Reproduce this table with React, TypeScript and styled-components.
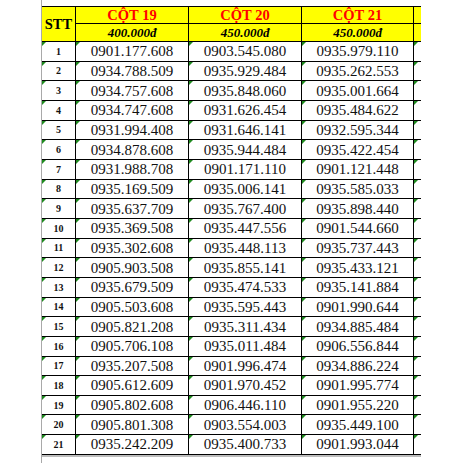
import styled, { createGlobalStyle } from 'styled-components'

const GlobalStyle = createGlobalStyle`
  html, body {
    margin: 0;
    padding: 0;
    background: #ffffff;
  }
  body {
    font-family: "Liberation Serif", "Times New Roman", serif;
  }
`

const Page = styled.div`
  width: 463px;
  height: 463px;
  overflow: hidden;
  padding-left: 41px;
  box-sizing: border-box;
`

const Frame = styled.div`
  height: 100%;
  border-left: 1px solid #a9a9a9;
  padding-top: 6px;
  box-sizing: border-box;
`

const TableWrap = styled.div`
  display: inline-block;
  border-bottom: 2px solid #bcbcbc;
`

const Table = styled.table`
  border-collapse: separate;
  border-spacing: 0;
  table-layout: fixed;
  border-top: 1px solid #000;
`

interface CellProps {
  $w?: number;
  $open?: boolean;
}

const HeadCell = styled.th<CellProps>`
  box-sizing: border-box;
  width: ${p => p.$w}px;
  padding: 0;
  background: #ffff00;
  border-right: ${p => (p.$open ? 'none' : '1px solid #000')};
  border-bottom: 1px solid #000;
  text-align: center;
  vertical-align: middle;
  font-weight: bold;
  white-space: nowrap;
  overflow: hidden;
`

const SttHead = styled(HeadCell)`
  font-size: 14.5px;
  color: #000;
`

const TitleCell = styled(HeadCell)`
  height: 17px;
  font-size: 14.5px;
  color: #ff0000;
  line-height: 16px;
`

const PriceCell = styled(HeadCell)`
  height: 18px;
  font-size: 13px;
  font-style: italic;
  color: #000;
  line-height: 17px;
`

const Row = styled.tr`
  height: 19.67px;
`

const Cell = styled.td<CellProps>`
  position: relative;
  box-sizing: border-box;
  height: 19.67px;
  padding: 0;
  border-right: ${p => (p.$open ? 'none' : '1px solid #000')};
  border-bottom: 1px solid #000;
  text-align: center;
  vertical-align: middle;
  white-space: nowrap;
  overflow: hidden;
  &::before {
    content: '';
    position: absolute;
    left: 0;
    top: 0;
    border-top: 4px solid #1e8a1e;
    border-right: 4px solid transparent;
  }
`

const SttCell = styled(Cell)`
  font-size: 10px;
  font-weight: bold;
  color: #111;
`

const PhoneCell = styled(Cell)`
  font-size: 15px;
  color: #111;
  line-height: 18px;
`

const columns = [
  { title: 'CỘT 19', price: '400.000đ' },
  { title: 'CỘT 20', price: '450.000đ' },
  { title: 'CỘT 21', price: '450.000đ' },
]

const widths = [113, 113, 112]

const rows = [
  ['0901.177.608', '0903.545.080', '0935.979.110'],
  ['0934.788.509', '0935.929.484', '0935.262.553'],
  ['0934.757.608', '0935.848.060', '0935.001.664'],
  ['0934.747.608', '0931.626.454', '0935.484.622'],
  ['0931.994.408', '0931.646.141', '0932.595.344'],
  ['0934.878.608', '0935.944.484', '0935.422.454'],
  ['0931.988.708', '0901.171.110', '0901.121.448'],
  ['0935.169.509', '0935.006.141', '0935.585.033'],
  ['0935.637.709', '0935.767.400', '0935.898.440'],
  ['0935.369.508', '0935.447.556', '0901.544.660'],
  ['0935.302.608', '0935.448.113', '0935.737.443'],
  ['0905.903.508', '0935.855.141', '0935.433.121'],
  ['0935.679.509', '0935.474.533', '0935.141.884'],
  ['0905.503.608', '0935.595.443', '0901.990.644'],
  ['0905.821.208', '0935.311.434', '0934.885.484'],
  ['0905.706.108', '0935.011.484', '0906.556.844'],
  ['0935.207.508', '0901.996.474', '0934.886.224'],
  ['0905.612.609', '0901.970.452', '0901.995.774'],
  ['0905.802.608', '0906.446.110', '0901.955.220'],
  ['0905.801.308', '0903.554.003', '0935.449.100'],
  ['0935.242.209', '0935.400.733', '0901.993.044'],
]

const App = () => {
  return (
    <>
      <GlobalStyle />
      <Page>
        <Frame>
          <TableWrap>
            <Table>
              <colgroup>
                <col style={{ width: 34 }} />
                {widths.map((w, i) => (
                  <col key={i} style={{ width: w }} />
                ))}
                <col style={{ width: 7 }} />
              </colgroup>
              <thead>
                <tr>
                  <SttHead rowSpan={2} $w={34}>STT</SttHead>
                  {columns.map((c, i) => (
                    <TitleCell key={c.title} $w={widths[i]}>{c.title}</TitleCell>
                  ))}
                  <TitleCell $w={7} $open />
                </tr>
                <tr>
                  {columns.map((c, i) => (
                    <PriceCell key={c.title} $w={widths[i]}>{c.price}</PriceCell>
                  ))}
                  <PriceCell $w={7} $open />
                </tr>
              </thead>
              <tbody>
                {rows.map((r, i) => (
                  <Row key={i}>
                    <SttCell>{i + 1}</SttCell>
                    {r.map(n => (
                      <PhoneCell key={n}>{n}</PhoneCell>
                    ))}
                    <Cell $open />
                  </Row>
                ))}
              </tbody>
            </Table>
          </TableWrap>
        </Frame>
      </Page>
    </>
  )
}

export default App
